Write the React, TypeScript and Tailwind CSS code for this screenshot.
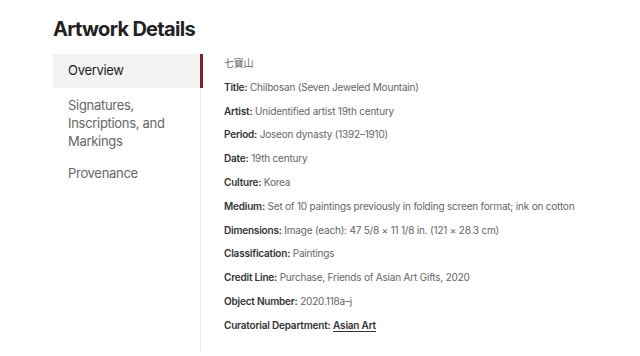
export default function App() {
  const rows: { label: string; value: string; link?: boolean }[] = [
    { label: "Title", value: "Chilbosan (Seven Jeweled Mountain)" },
    { label: "Artist", value: "Unidentified artist 19th century" },
    { label: "Period", value: "Joseon dynasty (1392–1910)" },
    { label: "Date", value: "19th century" },
    { label: "Culture", value: "Korea" },
    {
      label: "Medium",
      value: "Set of 10 paintings previously in folding screen format; ink on cotton",
    },
    { label: "Dimensions", value: "Image (each): 47 5/8 × 11 1/8 in. (121 × 28.3 cm)" },
    { label: "Classification", value: "Paintings" },
    { label: "Credit Line", value: "Purchase, Friends of Asian Art Gifts, 2020" },
    { label: "Object Number", value: "2020.118a–j" },
    { label: "Curatorial Department", value: "Asian Art", link: true },
  ];

  return (
    <div className="min-h-screen bg-white font-['Inter','Noto_Sans_CJK_JP',sans-serif] text-[#222]">
      <div className="px-[53px] pt-[15px]">
        <h1 className="text-[20px] font-bold leading-[28px] tracking-[-0.7px] text-[#222]">
          Artwork Details
        </h1>

        <div className="mt-[11px] flex">
          {/* Tabs */}
          <nav className="w-[147px] shrink-0 tracking-[-0.3px]">
            <div className="flex h-[34px] items-center bg-[#f2f2f2] pl-[15px] text-[13px] text-[#222]">
              Overview
            </div>
            <div className="pl-[15px] pt-[8px] text-[13px] leading-[18px] text-[#666]">
              Signatures,
              <br />
              Inscriptions, and
              <br />
              Markings
            </div>
            <div className="pl-[15px] pt-[14px] text-[13px] leading-[18px] text-[#666]">
              Provenance
            </div>
          </nav>

          {/* Panel */}
          <div className="flex min-h-[298px] flex-1 border-l border-[#eee]">
            <div className="-ml-px h-[34px] w-[3px] shrink-0 bg-[#7a2230]" />
            <div className="flex-1 pl-[21px] pt-[2px] text-[10px] leading-[14px] tracking-[-0.2px]">
              <p className="text-[#666]">七寶山</p>
              {rows.map((r) => (
                <p key={r.label} className="mt-[9.8px] text-[#666]">
                  <span className="font-semibold text-[#333]">{r.label}:</span>{" "}
                  {r.link ? (
                    <a className="font-semibold text-[#333] underline underline-offset-2">
                      {r.value}
                    </a>
                  ) : (
                    r.value
                  )}
                </p>
              ))}
            </div>
          </div>
        </div>
      </div>
    </div>
  );
}
